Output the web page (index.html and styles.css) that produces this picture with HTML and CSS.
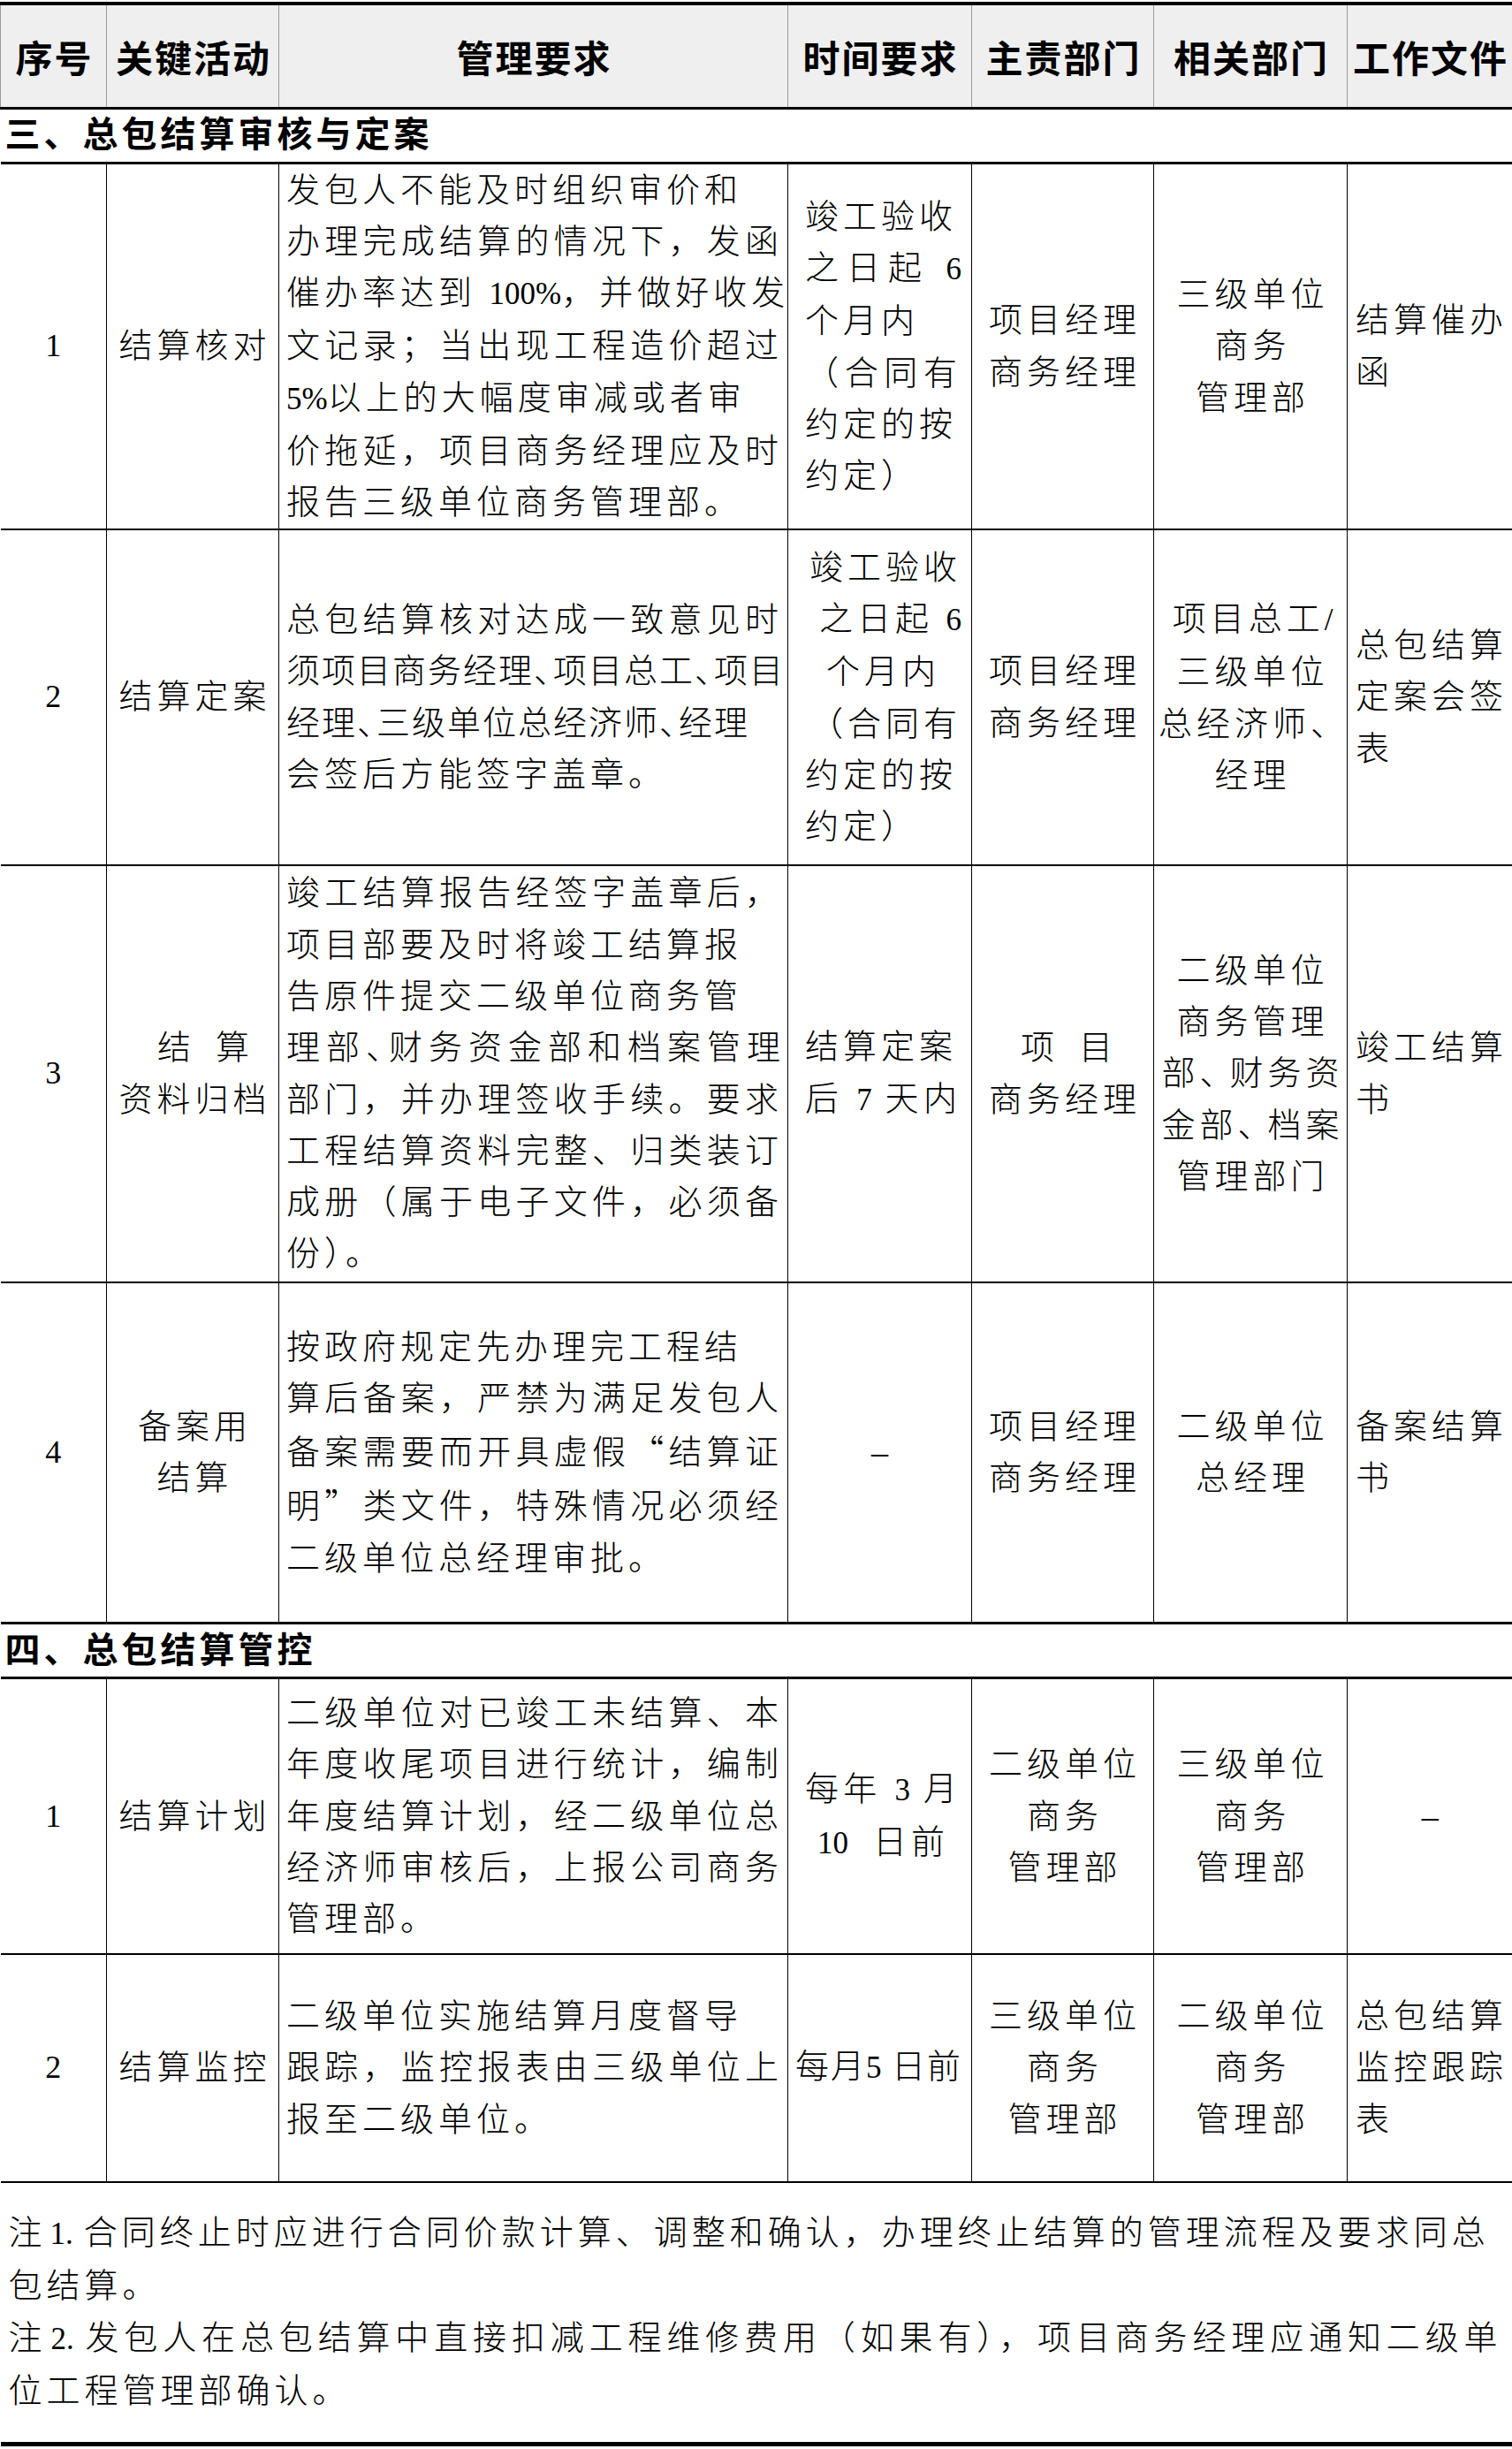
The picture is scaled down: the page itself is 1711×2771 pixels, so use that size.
FILE: index.html
```html
<!DOCTYPE html>
<html lang="zh-CN">
<head>
<meta charset="utf-8">
<title>总包结算审核与管控</title>
<link rel="stylesheet" href="styles.css">
</head>
<body>
<table class="sheet">
<colgroup>
<col class="w1"><col class="w2"><col class="w3"><col class="w4"><col class="w5"><col class="w6"><col class="w7">
</colgroup>
<thead>
<tr class="hh">
<th class="first">序号</th><th>关键活动</th><th>管理要求</th><th>时间要求</th><th>主责部门</th><th>相关部门</th><th class="last">工作文件</th>
</tr>
</thead>
<tbody>
<tr class="sec"><td colspan="7" class="first last">三、总包结算审核与定案</td></tr>

<tr class="r1">
<td class="no first">1</td>
<td class="act">结算核对</td>
<td class="req">
<span class="l">发包人不能及时组织审价和</span>
<span class="l j">办理完成结算的情况下，发函</span>
<span class="l j">催办率达到 <span class="n">100%</span>，并做好收发</span>
<span class="l j">文记录；当出现工程造价超过</span>
<span class="l"><span class="n">5%</span>以上的大幅度审减或者审</span>
<span class="l j">价拖延，项目商务经理应及时</span>
<span class="l">报告三级单位商务管理部。</span>
</td>
<td class="tm">
<span class="l">竣工验收</span>
<span class="l j">之日起 <span class="n">6</span></span>
<span class="l">个月内</span>
<span class="l j">（合同有</span>
<span class="l">约定的按</span>
<span class="l">约定）</span>
</td>
<td class="dep"><span class="l">项目经理</span><span class="l">商务经理</span></td>
<td class="dep"><span class="l">三级单位</span><span class="l">商务</span><span class="l">管理部</span></td>
<td class="doc last"><span class="l">结算催办</span><span class="l">函</span></td>
</tr>

<tr class="r2">
<td class="no first">2</td>
<td class="act">结算定案</td>
<td class="req">
<span class="l j">总包结算核对达成一致意见时</span>
<span class="l j t3">须项目商务经理<span class="pc">、</span>项目总工<span class="pc">、</span>项目</span>
<span class="l t3">经理<span class="pc">、</span>三级单位总经济师<span class="pc">、</span>经理</span>
<span class="l">会签后方能签字盖章。</span>
</td>
<td class="tm">
<span class="l ar">竣工验收</span>
<span class="l ar">之日起 <span class="n">6</span></span>
<span class="l ac">个月内</span>
<span class="l ar">（合同有</span>
<span class="l">约定的按</span>
<span class="l">约定）</span>
</td>
<td class="dep"><span class="l">项目经理</span><span class="l">商务经理</span></td>
<td class="dep"><span class="l">项目总工<span class="n">/</span></span><span class="l">三级单位</span><span class="l">总经济师、</span><span class="l">经理</span></td>
<td class="doc last"><span class="l">总包结算</span><span class="l">定案会签</span><span class="l">表</span></td>
</tr>

<tr class="r3">
<td class="no first">3</td>
<td class="act"><span class="l shift">结<span class="sp"></span>算</span><span class="l">资料归档</span></td>
<td class="req">
<span class="l j">竣工结算报告经签字盖章后，</span>
<span class="l">项目部要及时将竣工结算报</span>
<span class="l">告原件提交二级单位商务管</span>
<span class="l j t4">理部<span class="pc">、</span>财务资金部和档案管理</span>
<span class="l j">部门，并办理签收手续。要求</span>
<span class="l j">工程结算资料完整、归类装订</span>
<span class="l j">成册（属于电子文件，必须备</span>
<span class="l">份）。</span>
</td>
<td class="tm">
<span class="l">结算定案</span>
<span class="l j">后 <span class="n">7</span> 天内</span>
</td>
<td class="dep"><span class="l shift2">项<span class="sp"></span>目</span><span class="l">商务经理</span></td>
<td class="dep"><span class="l">二级单位</span><span class="l">商务管理</span><span class="l">部<span class="pc2">、</span>财务资</span><span class="l">金部<span class="pc2">、</span>档案</span><span class="l">管理部门</span></td>
<td class="doc last"><span class="l">竣工结算</span><span class="l">书</span></td>
</tr>

<tr class="r4">
<td class="no first">4</td>
<td class="act"><span class="l">备案用</span><span class="l">结算</span></td>
<td class="req">
<span class="l">按政府规定先办理完工程结</span>
<span class="l j">算后备案，严禁为满足发包人</span>
<span class="l j">备案需要而开具虚假<span class="q">“</span>结算证</span>
<span class="l j">明<span class="q">”</span>类文件，特殊情况必须经</span>
<span class="l">二级单位总经理审批。</span>
</td>
<td class="tm dash">–</td>
<td class="dep"><span class="l">项目经理</span><span class="l">商务经理</span></td>
<td class="dep"><span class="l">二级单位</span><span class="l">总经理</span></td>
<td class="doc last"><span class="l">备案结算</span><span class="l">书</span></td>
</tr>

<tr class="sec"><td colspan="7" class="first last">四、总包结算管控</td></tr>

<tr class="r5">
<td class="no first">1</td>
<td class="act">结算计划</td>
<td class="req">
<span class="l j">二级单位对已竣工未结算、本</span>
<span class="l j">年度收尾项目进行统计，编制</span>
<span class="l j">年度结算计划，经二级单位总</span>
<span class="l j">经济师审核后，上报公司商务</span>
<span class="l">管理部。</span>
</td>
<td class="tm">
<span class="l j">每年 <span class="n">3</span> 月</span>
<span class="l ac"><span class="n">10</span><span class="sp2"></span>日前</span>
</td>
<td class="dep"><span class="l">二级单位</span><span class="l">商务</span><span class="l">管理部</span></td>
<td class="dep"><span class="l">三级单位</span><span class="l">商务</span><span class="l">管理部</span></td>
<td class="doc last dash">–</td>
</tr>

<tr class="r6">
<td class="no first">2</td>
<td class="act">结算监控</td>
<td class="req">
<span class="l">二级单位实施结算月度督导</span>
<span class="l j">跟踪，监控报表由三级单位上</span>
<span class="l">报至二级单位。</span>
</td>
<td class="tm tm-wide"><span class="l">每月<span class="n">5</span> 日前</span></td>
<td class="dep"><span class="l">三级单位</span><span class="l">商务</span><span class="l">管理部</span></td>
<td class="dep"><span class="l">二级单位</span><span class="l">商务</span><span class="l">管理部</span></td>
<td class="doc last"><span class="l">总包结算</span><span class="l">监控跟踪</span><span class="l">表</span></td>
</tr>

<tr class="notes">
<td colspan="7" class="first last">
<span class="l j n1">注<span class="n nt">1.</span>合同终止时应进行合同价款计算、调整和确认，办理终止结算的管理流程及要求同总</span>
<span class="l">包结算。</span>
<span class="l j">注<span class="n nt">2.</span>发包人在总包结算中直接扣减工程维修费用（如果有），项目商务经理应通知二级单</span>
<span class="l">位工程管理部确认。</span>
</td>
</tr>
</tbody>
</table>
</body>
</html>
```

FILE: styles.css
```css
html, body {
  margin: 0;
  padding: 0;
  background: #ffffff;
}

body {
  width: 1711px;
}

.sheet {
  border-collapse: collapse;
  table-layout: fixed;
  width: 1711px;
  margin-top: 2px;
  font-family: "Liberation Serif", "Noto Sans CJK SC", serif;
  color: #000;
}

.w1 { width: 120px; }
.w2 { width: 195px; }
.w3 { width: 576px; }
.w4 { width: 208px; }
.w5 { width: 206px; }
.w6 { width: 219px; }
.w7 { width: 187px; }

.sheet th,
.sheet td {
  padding: 0;
  vertical-align: middle;
}

/* header */
.sheet th {
  background: #efefef;
  font-size: 42px;
  font-weight: 700;
  letter-spacing: 2px;
  text-align: center;
  padding-left: 2px;
  border-top: 4px solid #000;
  border-bottom: 3px solid #000;
  border-left: 1.5px solid #9a9a9a;
  border-right: 1.5px solid #9a9a9a;
  white-space: nowrap;
}

.hh { height: 118px; }

/* body cells */
.sheet td {
  font-size: 38px;
  font-weight: 300;
  letter-spacing: 5px;
  line-height: 58.3px;
  border-top: 2px solid #000;
  border-bottom: 2px solid #000;
  border-left: 1.5px solid #000;
  border-right: 1.5px solid #000;
}

.sheet td.first { border-left: none; }
.sheet td.last { border-right: none; }

.sec { height: 62px; }
.sheet .sec td {
  font-weight: 700;
  font-size: 40px;
  letter-spacing: 4px;
  padding-left: 5px;
  border-top: 3px solid #000;
  border-bottom: 3px solid #000;
  line-height: 50px;
}

.r1 { height: 409px; }
.r2 { height: 380px; }
.r3 { height: 472px; }
.r4 { height: 386px; }
.r5 { height: 312px; }
.r6 { height: 258px; }
.notes { height: 297px; }

.sheet .notes td {
  line-height: 59px;
  padding-left: 9px;
  padding-right: 12px;
  border-bottom: 5px solid #000;
}

.n1 { padding-right: 18px; }

.l {
  display: block;
  white-space: nowrap;
}

.j {
  text-align: justify;
  text-align-last: justify;
}

.ar { text-align: right; }
.ac { text-align: center; }

.n {
  font-family: "Liberation Serif", serif;
  font-size: 35px;
  font-weight: 400;
  letter-spacing: 0;
}

.nt { margin: 0 12px 0 4px; }

.q {
  font-family: "Noto Sans CJK SC", sans-serif;
}

.pc { letter-spacing: -16px; }
.pc2 { letter-spacing: -4px; }

.t3 { letter-spacing: 2px; }
.t4 { letter-spacing: 3px; }

.sp {
  display: inline-block;
  width: 23px;
}

.sp2 {
  display: inline-block;
  width: 28px;
}

.sheet td.no {
  text-align: center;
  font-size: 36px;
  font-weight: 400;
  letter-spacing: 0;
}

.sheet td.act {
  text-align: center;
  padding-left: 5px;
}

.shift { padding-left: 24px; }
.shift2 { padding-left: 9px; }

.sheet td.req {
  text-align: left;
  padding-left: 8px;
  padding-right: 5px;
}

.sheet td.tm {
  text-align: left;
  padding-left: 19px;
  padding-right: 11px;
}

.sheet td.tm-wide {
  padding-left: 8px;
  padding-right: 2px;
  letter-spacing: 2px;
}

.sheet td.dep {
  text-align: center;
  padding-left: 5px;
}

.sheet td.doc {
  text-align: left;
  padding-left: 9px;
}

.sheet td.dash {
  text-align: center;
  padding-left: 0;
  padding-right: 0;
  letter-spacing: 0;
}
```
